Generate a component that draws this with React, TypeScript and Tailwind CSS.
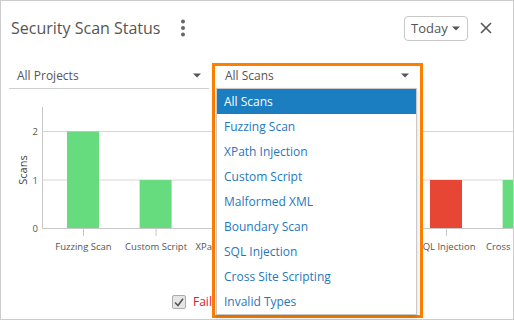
import React from "react";

const font = { fontFamily: "'Open Sans', 'Noto Sans', sans-serif" };

const categories = [
  { name: "Fuzzing Scan", v: 2, c: "#66dc7e" },
  { name: "Custom Script", v: 1, c: "#66dc7e" },
  { name: "XPath Injection", v: 1, c: "#e64633" },
  { name: "Malformed XML", v: 1, c: "#66dc7e" },
  { name: "Boundary Scan", v: 1, c: "#66dc7e" },
  { name: "SQL Injection", v: 1, c: "#e64633" },
  { name: "Cross Site Scripting", v: 1, c: "#66dc7e" },
];

const menuItems = [
  "All Scans",
  "Fuzzing Scan",
  "XPath Injection",
  "Custom Script",
  "Malformed XML",
  "Boundary Scan",
  "SQL Injection",
  "Cross Site Scripting",
  "Invalid Types",
];

function Caret() {
  return (
    <svg width="8" height="5" viewBox="0 0 8 5">
      <path d="M0 0.5 L8 0.5 L4 4.5 Z" fill="#555" />
    </svg>
  );
}

function Chart() {
  // svg coords: page x - 1, page y - 89
  const y0 = 139.5;
  const unit = 48.5;
  const centers = categories.map((_, i) => 82 + 72.6 * i);
  return (
    <svg width="512" height="200" viewBox="0 0 512 200" className="block">
      <line x1="41.5" y1="18" x2="41.5" y2="140" stroke="#c8c8c8" />
      <line x1="41.5" y1="42.5" x2="512" y2="42.5" stroke="#d6d6d6" />
      <line x1="41.5" y1="91" x2="512" y2="91" stroke="#d6d6d6" />
      {categories.map((c, i) => (
        <rect
          key={c.name}
          x={centers[i] - 16}
          y={y0 - c.v * unit}
          width="32"
          height={c.v * unit}
          fill={c.c}
        />
      ))}
      <line x1="41.5" y1={y0} x2="512" y2={y0} stroke="#c8c8c8" />
      {centers.map((cx, i) => (
        <line key={i} x1={cx + 0.5} y1={y0} x2={cx + 0.5} y2="147" stroke="#c8c8c8" />
      ))}
      <g fill="#555" fontSize="9.5" style={font}>
        <text x="37" y="42.5" textAnchor="end" dominantBaseline="central">2</text>
        <text x="37" y="91" textAnchor="end" dominantBaseline="central">1</text>
        <text x="37" y="139.5" textAnchor="end" dominantBaseline="central">0</text>
        {categories.map((c, i) =>
          i === categories.length - 1 ? (
            <text key={c.name} x="485" y="157" dominantBaseline="central">{c.name}</text>
          ) : (
            <text key={c.name} x={centers[i] + 0.5} y="157" textAnchor="middle" dominantBaseline="central">
              {c.name}
            </text>
          )
        )}
      </g>
      <text
        x="21"
        y="81"
        fill="#444"
        fontSize="11"
        textAnchor="middle"
        dominantBaseline="central"
        transform="rotate(-90 21 81)"
        style={font}
      >
        Scans
      </text>
    </svg>
  );
}

export default function App() {
  return (
    <div className="relative w-[514px] h-[320px] overflow-hidden bg-white" style={font}>
      <div className="w-[514px] h-[320px] border border-[#cdcdcd] flex flex-col">
        {/* Header */}
        <div className="h-[54px] flex items-center pl-[10px] pr-[21px]">
          <div className="text-[16px] text-[#555] leading-none">Security Scan Status</div>
          <svg width="6" height="18" viewBox="0 0 6 18" className="ml-[19px]">
            <circle cx="3" cy="2.5" r="2" fill="#666" />
            <circle cx="3" cy="9" r="2" fill="#666" />
            <circle cx="3" cy="15.5" r="2" fill="#666" />
          </svg>
          <div className="flex-1" />
          <div className="w-[64px] h-[25px] border border-[#c8c8c8] rounded-[4px] flex items-center justify-between pl-[6px] pr-[7px]">
            <span className="text-[13px] text-[#555] leading-none">Today</span>
            <Caret />
          </div>
          <svg width="12" height="12" viewBox="0 0 12 12" className="ml-[12px]">
            <path d="M1 1 L11 11 M11 1 L1 11" stroke="#555" strokeWidth="1.6" />
          </svg>
        </div>

        {/* Filters */}
        <div className="mt-[8px] flex gap-[8px] pl-[8px]">
          <div className="w-[200px] h-[26px] border-b border-[#cfcfcf] flex items-center justify-between pl-[8px] pr-[8px]">
            <span className="text-[12px] text-[#555]">All Projects</span>
            <Caret />
          </div>
          <div className="relative z-20 w-[200px] h-[26px] border-b border-[#cfcfcf] flex items-center justify-between pl-[8px] pr-[8px]">
            <span className="text-[12px] text-[#555]">All Scans</span>
            <Caret />
          </div>
        </div>

        {/* Chart */}
        <Chart />

        {/* Legend */}
        <div className="mt-[6px] flex items-center pl-[171px]">
          <div className="w-[14px] h-[14px] bg-[#e6e6e6] border border-[#aaa] rounded-[2px] flex items-center justify-center">
            <svg width="10" height="9" viewBox="0 0 10 9">
              <path d="M1 4.5 L4 7.5 L9 0.8" stroke="#555" strokeWidth="1.6" fill="none" />
            </svg>
          </div>
          <span className="ml-[7px] text-[12px] text-[#e8142f] leading-none">Fail</span>
        </div>
      </div>

      {/* Orange highlight frame */}
      <div className="absolute z-10 left-[212px] top-[63px] w-[211px] h-[255px] border-[3px] border-[#fd7f00] bg-white" />

      {/* Dropdown menu */}
      <div className="absolute z-30 left-[216px] top-[88px] w-[201px] bg-white border border-[#c9c9c9] shadow-[0_2px_4px_rgba(0,0,0,0.18)]">
        {menuItems.map((m, i) => (
          <div
            key={m}
            className={
              i === 0
                ? "h-[25px] flex items-center pl-[7px] text-[12px] bg-[#1a7ec1] text-white"
                : "h-[25px] flex items-center pl-[7px] text-[12px] text-[#1f78bd]"
            }
          >
            {m}
          </div>
        ))}
      </div>
    </div>
  );
}
